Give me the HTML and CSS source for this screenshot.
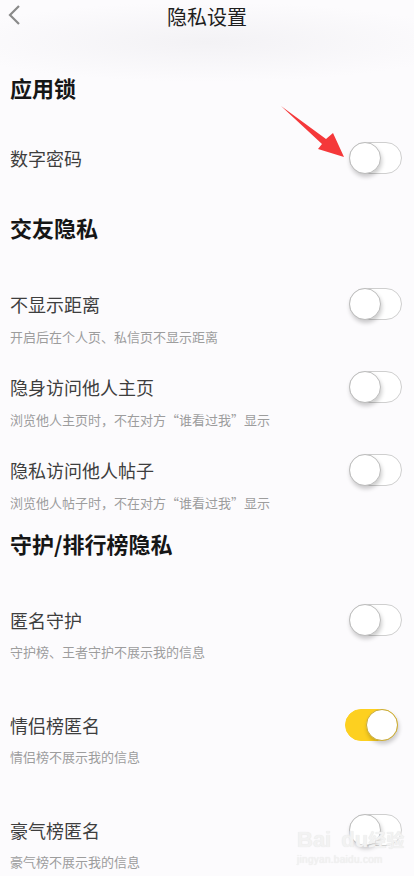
FILE: index.html
```html
<!DOCTYPE html>
<html lang="zh-CN">

<head>
  <meta charset="UTF-8">
  <meta name="viewport" content="width=device-width, initial-scale=1.0">
  <title>隐私设置</title>
  <link rel="stylesheet" href="styles.css">
</head>

<body>
  <div id="page">
    <div class="nav">
      <svg class="nav-back" width="14" height="22" viewBox="0 0 14 22">
        <polyline points="11,2 2,11 11,20" fill="none" stroke="#8a8a8a" stroke-width="2.2" />
      </svg>
      <div class="nav-title">隐私设置</div>
    </div>

    <!-- 应用锁 -->
    <div class="section-title first">应用锁</div>
    <div class="item">
      <div class="item-row">
        <span class="item-name">数字密码</span>
        <span class="switch"></span>
      </div>
    </div>

    <!-- 交友隐私 -->
    <div class="section-title">交友隐私</div>
    <div class="item">
      <div class="item-row">
        <span class="item-name">不显示距离</span>
        <span class="switch"></span>
      </div>
      <div class="item-desc">开启后在个人页、私信页不显示距离</div>
    </div>
    <div class="item">
      <div class="item-row">
        <span class="item-name">隐身访问他人主页</span>
        <span class="switch"></span>
      </div>
      <div class="item-desc">浏览他人主页时，不在对方“谁看过我”显示</div>
    </div>
    <div class="item last">
      <div class="item-row">
        <span class="item-name">隐私访问他人帖子</span>
        <span class="switch"></span>
      </div>
      <div class="item-desc">浏览他人帖子时，不在对方“谁看过我”显示</div>
    </div>

    <!-- 守护/排行榜隐私 -->
    <div class="section-title tight">守护/排行榜隐私</div>
    <div class="item wide">
      <div class="item-row">
        <span class="item-name">匿名守护</span>
        <span class="switch"></span>
      </div>
      <div class="item-desc">守护榜、王者守护不展示我的信息</div>
    </div>
    <div class="item wide">
      <div class="item-row">
        <span class="item-name">情侣榜匿名</span>
        <span class="switch on"></span>
      </div>
      <div class="item-desc">情侣榜不展示我的信息</div>
    </div>
    <div class="item wide">
      <div class="item-row">
        <span class="item-name">豪气榜匿名</span>
        <span class="switch"></span>
      </div>
      <div class="item-desc">豪气榜不展示我的信息</div>
    </div>

    <!-- 红色箭头 -->
    <svg class="arrow" width="414" height="200" viewBox="0 0 414 200">
      <polygon points="281,106 326,139 333,133 344,157 318,149 322,144" fill="#f5383a" />
    </svg>

    <!-- 水印 -->
    <div class="watermark">
      <div class="wm-logo">Bai<span class="wm-paw"></span>du<span class="wm-cn">经验</span></div>
      <div class="wm-url">jingyan.baidu.com</div>
    </div>
  </div>
</body>

</html>
```

FILE: styles.css
```css
* {
  margin: 0;
  padding: 0;
}

body {
  background-color: #fcfbfd;
  font-family: "Noto Sans CJK SC", "Noto Sans", sans-serif;
}

#page {
  position: relative;
  width: 414px;
  height: 876px;
  overflow: hidden;
  background: radial-gradient(ellipse 260px 40px at 50% 42px, #f3f2f5, rgba(252, 251, 253, 0)) no-repeat;
}

.nav {
  position: relative;
  height: 34px;
  display: flex;
  align-items: center;
  justify-content: center;
}

.nav-back {
  position: absolute;
  left: 8px;
  top: 4px;
}

.nav-title {
  font-size: 20px;
  line-height: 34px;
  color: #1e1e1e;
}

.section-title {
  margin: 38px 0 46px;
  padding: 0 10px;
  font-size: 22px;
  line-height: 30px;
  font-weight: 700;
  color: #161616;
}

.section-title.first {
  margin-top: 38px;
  margin-bottom: 40px;
}

.section-title.tight {
  margin-top: 0;
  margin-bottom: 46px;
}

.item {
  padding: 0 12px 0 10px;
  margin-bottom: 25px;
}

.item.last {
  margin-bottom: 16px;
}

.item.wide {
  margin-bottom: 48px;
}

.item-row {
  display: flex;
  justify-content: space-between;
  align-items: center;
  height: 32px;
}

.item-name {
  font-size: 18px;
  color: #3e3e3e;
}

.item-desc {
  margin-top: 8px;
  font-size: 13px;
  line-height: 18px;
  color: #9d9d9d;
}

.item.wide .item-desc {
  margin-top: 7px;
}

/* 开关 */
.switch {
  position: relative;
  width: 51px;
  height: 30px;
  border: 1px solid #cfcfcf;
  border-radius: 16px;
  background-color: #fff;
}

.switch::after {
  content: "";
  position: absolute;
  left: -1px;
  top: -1px;
  width: 30px;
  height: 30px;
  border: 1px solid #bdbdbd;
  border-radius: 50%;
  background-color: #fff;
  box-shadow: 1px 3px 4px rgba(0, 0, 0, 0.2);
}

.switch.on {
  margin-right: 4px;
  border-color: #fdd020;
  background-color: #fdd020;
}

.switch.on::after {
  left: auto;
  right: -1px;
  border-color: #c9ab3a;
}

.arrow {
  position: absolute;
  left: 0;
  top: 0;
}

.watermark {
  position: absolute;
  left: 297px;
  top: 826px;
  color: #f2f2f2;
  font-family: "Liberation Sans", sans-serif;
  text-shadow: 0 0 1px #e2e2e2;
}

.wm-logo {
  font-size: 22px;
  font-weight: 700;
  line-height: 26px;
}

.wm-paw {
  display: inline-block;
  width: 10px;
}

.wm-cn {
  font-family: "Noto Sans CJK SC", sans-serif;
  font-size: 18px;
}

.wm-url {
  font-size: 10px;
  line-height: 14px;
  letter-spacing: 0.3px;
}
```
